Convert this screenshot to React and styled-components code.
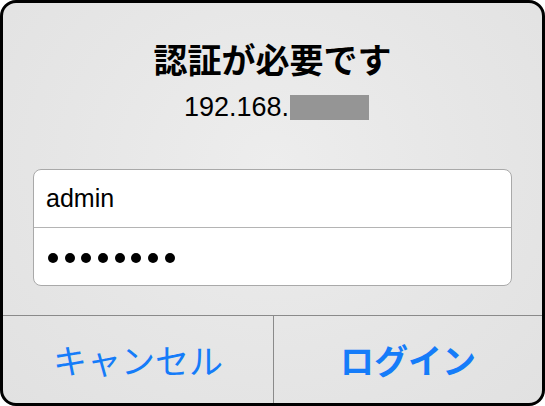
import React from 'react';
import styled, { createGlobalStyle } from 'styled-components';

const GlobalStyle = createGlobalStyle`
  html, body {
    margin: 0;
    padding: 0;
    background: #fff;
  }

  body {
    font-family: "Liberation Sans", "Noto Sans CJK JP", sans-serif;
  }
`;

const Dialog = styled.div`
  width: 545px;
  height: 406px;
  box-sizing: border-box;
  border: 3px solid #000;
  border-radius: 16px;
  overflow: hidden;
  display: flex;
  flex-direction: column;
  background: radial-gradient(ellipse at 50% 40%, #ededed 0%, #e6e6e6 55%, #e1e1e1 100%);
`;

const Header = styled.div`
  padding-top: 36px;
  text-align: center;
`;

const Title = styled.h1`
  margin: 0;
  font-family: "Noto Sans CJK JP", sans-serif;
  font-size: 34px;
  font-weight: 700;
  line-height: 40px;
  color: #000;
`;

const Host = styled.p`
  margin: 13px 0 0;
  padding-left: 8px;
  font-size: 27px;
  line-height: 30px;
  color: #000;
`;

const Masked = styled.span`
  display: inline-block;
  width: 79px;
  height: 25px;
  margin-left: 1px;
  vertical-align: -4px;
  background: #959595;
`;

const Fields = styled.div`
  margin: 47px 30px 0;
  background: #fff;
  border: 1px solid #a9a9a9;
  border-radius: 8px;
  overflow: hidden;
`;

const Field = styled.div`
  height: 57px;
  display: flex;
  align-items: center;
  padding-left: 12px;
  font-size: 25px;
  color: #000;

  & + & {
    border-top: 1px solid #b4b4b4;
  }
`;

const Dots = styled.div`
  display: flex;
  gap: 6.7px;
  margin-left: 2px;
  margin-top: 2px;
`;

const Dot = styled.span`
  width: 10px;
  height: 10px;
  border-radius: 50%;
  background: #000;
`;

const Actions = styled.div`
  margin-top: auto;
  height: 88px;
  box-sizing: border-box;
  border-top: 1px solid #8a8a8a;
  display: grid;
  grid-template-columns: 270px 1fr;
`;

const Action = styled.button`
  border: none;
  background: transparent;
  padding: 0;
  margin: 0;
  font-family: "Noto Sans CJK JP", sans-serif;
  font-size: 34px;
  font-weight: ${props => (props.primary ? 700 : 400)};
  color: #157cf9;
  display: flex;
  align-items: center;
  justify-content: center;
  cursor: pointer;

  & + & {
    border-left: 1px solid #8a8a8a;
  }
`;

const App = () => (
  <>
    <GlobalStyle />
    <Dialog>
      <Header>
        <Title>認証が必要です</Title>
        <Host>
          192.168.<Masked />
        </Host>
      </Header>

      <Fields>
        <Field>admin</Field>
        <Field>
          <Dots>
            {Array.from({ length: 8 }).map((_, i) => (
              <Dot key={i} />
            ))}
          </Dots>
        </Field>
      </Fields>

      <Actions>
        <Action>キャンセル</Action>
        <Action primary>ログイン</Action>
      </Actions>
    </Dialog>
  </>
);

export default App;
